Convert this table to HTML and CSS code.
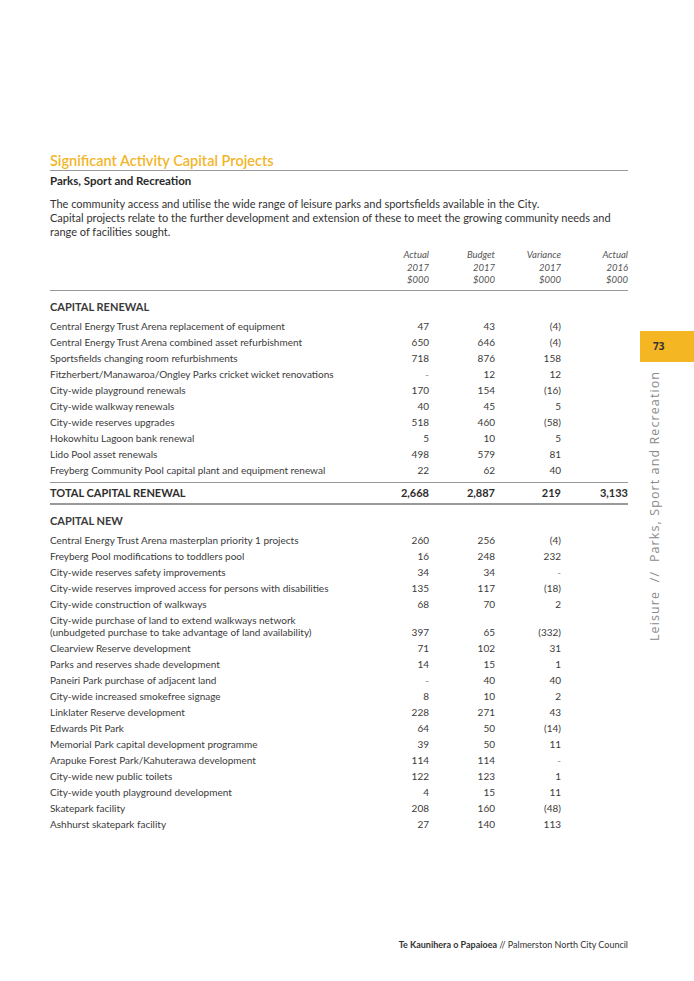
FILE: index.html
```html
<!DOCTYPE html>
<html>
<head>
<meta charset="utf-8">
<link rel="stylesheet" href="styles.css">
</head>
<body>
<div class="page">
  <main class="content">
    <h1 class="title">Significant Activity Capital Projects</h1>
    <h2 class="subtitle">Parks, Sport and Recreation</h2>
    <p class="intro">The community access and utilise the wide range of leisure parks and sportsfields available in the City.<br>Capital projects relate to the further development and extension of these to meet the growing community needs and range of facilities sought.</p>

    <div class="table">
      <div class="row head">
        <span></span>
        <span>Actual<br>2017<br>$000</span>
        <span>Budget<br>2017<br>$000</span>
        <span>Variance<br>2017<br>$000</span>
        <span>Actual<br>2016<br>$000</span>
      </div>

      <div class="section">CAPITAL RENEWAL</div>
      <div class="row"><span>Central Energy Trust Arena replacement of equipment</span><span>47</span><span>43</span><span>(4)</span><span></span></div>
      <div class="row"><span>Central Energy Trust Arena combined asset refurbishment</span><span>650</span><span>646</span><span>(4)</span><span></span></div>
      <div class="row"><span>Sportsfields changing room refurbishments</span><span>718</span><span>876</span><span>158</span><span></span></div>
      <div class="row"><span>Fitzherbert/Manawaroa/Ongley Parks cricket wicket renovations</span><span class="dash">-</span><span>12</span><span>12</span><span></span></div>
      <div class="row"><span>City-wide playground renewals</span><span>170</span><span>154</span><span>(16)</span><span></span></div>
      <div class="row"><span>City-wide walkway renewals</span><span>40</span><span>45</span><span>5</span><span></span></div>
      <div class="row"><span>City-wide reserves upgrades</span><span>518</span><span>460</span><span>(58)</span><span></span></div>
      <div class="row"><span>Hokowhitu Lagoon bank renewal</span><span>5</span><span>10</span><span>5</span><span></span></div>
      <div class="row"><span>Lido Pool asset renewals</span><span>498</span><span>579</span><span>81</span><span></span></div>
      <div class="row"><span>Freyberg Community Pool capital plant and equipment renewal</span><span>22</span><span>62</span><span>40</span><span></span></div>

      <div class="row total"><span>TOTAL CAPITAL RENEWAL</span><span>2,668</span><span>2,887</span><span>219</span><span>3,133</span></div>

      <div class="section new">CAPITAL NEW</div>
      <div class="row"><span>Central Energy Trust Arena masterplan priority 1 projects</span><span>260</span><span>256</span><span>(4)</span><span></span></div>
      <div class="row"><span>Freyberg Pool modifications to toddlers pool</span><span>16</span><span>248</span><span>232</span><span></span></div>
      <div class="row"><span>City-wide reserves safety improvements</span><span>34</span><span>34</span><span class="dash">-</span><span></span></div>
      <div class="row"><span>City-wide reserves improved access for persons with disabilities</span><span>135</span><span>117</span><span>(18)</span><span></span></div>
      <div class="row"><span>City-wide construction of walkways</span><span>68</span><span>70</span><span>2</span><span></span></div>
      <div class="row tall"><span>City-wide purchase of land to extend walkways network<br>(unbudgeted purchase to take advantage of land availability)</span><span>397</span><span>65</span><span>(332)</span><span></span></div>
      <div class="row"><span>Clearview Reserve development</span><span>71</span><span>102</span><span>31</span><span></span></div>
      <div class="row"><span>Parks and reserves shade development</span><span>14</span><span>15</span><span>1</span><span></span></div>
      <div class="row"><span>Paneiri Park purchase of adjacent land</span><span class="dash">-</span><span>40</span><span>40</span><span></span></div>
      <div class="row"><span>City-wide increased smokefree signage</span><span>8</span><span>10</span><span>2</span><span></span></div>
      <div class="row"><span>Linklater Reserve development</span><span>228</span><span>271</span><span>43</span><span></span></div>
      <div class="row"><span>Edwards Pit Park</span><span>64</span><span>50</span><span>(14)</span><span></span></div>
      <div class="row"><span>Memorial Park capital development programme</span><span>39</span><span>50</span><span>11</span><span></span></div>
      <div class="row"><span>Arapuke Forest Park/Kahuterawa development</span><span>114</span><span>114</span><span class="dash">-</span><span></span></div>
      <div class="row"><span>City-wide new public toilets</span><span>122</span><span>123</span><span>1</span><span></span></div>
      <div class="row"><span>City-wide youth playground development</span><span>4</span><span>15</span><span>11</span><span></span></div>
      <div class="row"><span>Skatepark facility</span><span>208</span><span>160</span><span>(48)</span><span></span></div>
      <div class="row"><span>Ashhurst skatepark facility</span><span>27</span><span>140</span><span>113</span><span></span></div>
    </div>
  </main>

  <aside class="side">
    <div class="pagenum">73</div>
    <div class="vtitle">Leisure&nbsp; //&nbsp; Parks, Sport and Recreation</div>
  </aside>

  <footer class="footer"><b>Te Kaunihera o Papaioea</b> // Palmerston North City Council</footer>
</div>
</body>
</html>
```

FILE: styles.css
```css
html, body {
  margin: 0;
  padding: 0;
  background: #fff;
}
.page {
  position: relative;
  width: 694px;
  height: 981px;
  font-family: "Lato", "Liberation Sans", sans-serif;
  color: #3b3b3b;
}
.content {
  position: absolute;
  left: 50px;
  top: 152px;
  width: 578px;
}
.title {
  margin: 0;
  font-size: 14.5px;
  line-height: 17px;
  font-weight: 600;
  color: #f2b62a;
  border-bottom: 1px solid #9a9a9a;
  padding-bottom: 1px;
}
.subtitle {
  margin: 2px 0 0;
  font-size: 11.5px;
  line-height: 15px;
  font-weight: 700;
  color: #2a2a2a;
}
.intro {
  margin: 9px 0 0;
  font-size: 11px;
  line-height: 14px;
  color: #333;
}
.table {
  margin-top: 10px;
}
.row {
  display: grid;
  grid-template-columns: 313px 66px 66px 66px 67px;
  font-size: 10px;
  line-height: 16px;
  color: #3b3b3b;
}
.row span:first-child {
  white-space: nowrap;
}
.row span:not(:first-child) {
  text-align: right;
}
.row .dash { color: #888; }
.head {
  font-style: italic;
  font-size: 9.5px;
  line-height: 12.5px;
  color: #555;
  padding-bottom: 3px;
  border-bottom: 1px solid #999;
}
.section {
  font-size: 11px;
  font-weight: 700;
  line-height: 14px;
  color: #3a3a3a;
  margin-top: 9px;
  margin-bottom: 4px;
}
.tall {
  line-height: 12px;
  padding: 2px 0;
}
.tall span:not(:first-child) {
  align-self: end;
}
.total {
  margin-top: 4px;
  border-top: 1px solid #999;
  border-bottom: 2px solid #999;
  font-size: 11px;
  font-weight: 700;
  line-height: 20px;
  color: #2e2e2e;
}
.section.new {
  margin-top: 9px;
  margin-bottom: 4px;
}
.side {
  position: absolute;
  left: 640px;
  top: 331px;
  width: 54px;
}
.pagenum {
  height: 31px;
  background: #f5b624;
  font-family: "Open Sans", sans-serif;
  font-weight: 700;
  font-size: 10px;
  line-height: 31px;
  padding-left: 13px;
  color: #333;
}
.vtitle {
  position: absolute;
  top: 48px;
  left: 4px;
  width: 22px;
  height: 262px;
  writing-mode: vertical-rl;
  transform: rotate(180deg);
  font-family: "Open Sans", sans-serif;
  font-size: 12.5px;
  letter-spacing: 1.1px;
  line-height: 22px;
  color: #8a8a8a;
  white-space: nowrap;
  text-align: left;
}
.footer {
  position: absolute;
  right: 66px;
  top: 939px;
  font-family: "Lato", "Liberation Sans", sans-serif;
  font-size: 9px;
  line-height: 12px;
  color: #333;
}
.footer b { font-weight: 700; }
```
